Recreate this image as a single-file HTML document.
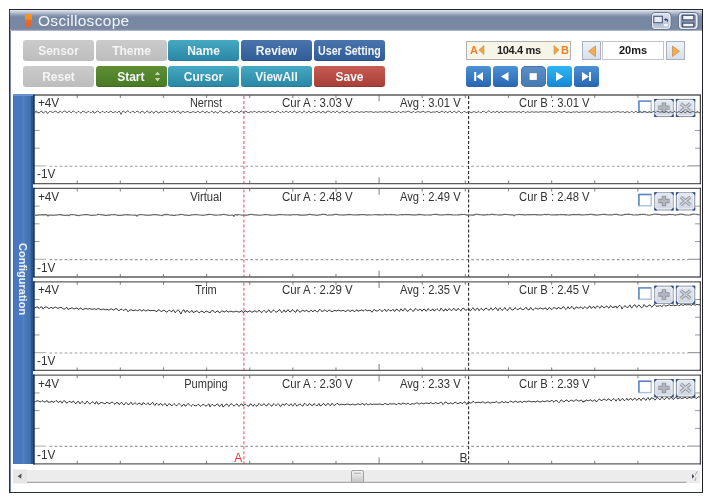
<!DOCTYPE html>
<html><head><meta charset="utf-8">
<style>
html,body{margin:0;padding:0;width:712px;height:502px;overflow:hidden;background:#fff;}
body{position:relative;font-family:"Liberation Sans",sans-serif;-webkit-font-smoothing:antialiased;}
.ttext,.btn,.tbox,.sidetext,.plots,.abs{will-change:transform;}
.abs{position:absolute;}
.win{position:absolute;left:9px;top:9px;width:692px;height:482px;border:1px solid #2a3448;border-right-color:#202228;border-bottom-color:#2a2e36;border-top-color:#24262c;background:#fff;}
.winl{position:absolute;left:10px;top:10px;width:1px;height:482px;background:#7888a8;}
.title{position:absolute;left:10px;top:10px;width:692px;height:21px;
 background:linear-gradient(#dfe5ee 0px,#c2cad8 2px,#8e9cb4 5px,#7888a2 7px,#7888a2 19px,#8a98b0 20px,#c8d0dc 21px);}
.ticon{position:absolute;left:24.8px;top:13.8px;width:6.8px;height:13.3px;background:linear-gradient(#f99424,#f68c22 38%,#ea6a2c 50%,#e6602e);}
.ttext{position:absolute;left:38px;top:10px;height:21px;line-height:21px;font-size:15.5px;color:#f4f6fa;letter-spacing:0.3px;}
.tb{position:absolute;top:12px;width:19px;height:17px;border-radius:3px;border:1px solid #b4bece;box-sizing:border-box;
 background:linear-gradient(#a4b0c4,#8a98b0);}
.btn{position:absolute;width:71px;height:21px;border-radius:3px;box-sizing:border-box;color:#f2f6f8;font-weight:bold;font-size:12px;
 line-height:23px;text-align:center;}
.gray{background:linear-gradient(#cbcbcb,#bdbdbd);color:#f4f4f4;}
.teal{background:linear-gradient(#46a9c2,#2a88a6);border-bottom:1px solid #227a94;}
.blue{background:linear-gradient(#4a74ac,#305c98);border-bottom:1px solid #2a5088;}
.green{background:linear-gradient(#5e8e34,#4a7a24);border-bottom:1px solid #3e6a1e;}
.red{background:linear-gradient(#c65c54,#aa3e38);border-bottom:1px solid #923430;}
.ab{position:absolute;left:466px;top:41px;width:105px;height:18.6px;box-sizing:border-box;border:1px solid #b0b0b0;background:#f7f4e8;}
.sbtn{position:absolute;top:41px;width:19px;height:19px;box-sizing:border-box;border:1px solid #a8b0c0;background:linear-gradient(#eef2f8,#d8e0ec);}
.tbox{position:absolute;left:602px;top:41px;width:62px;height:19px;box-sizing:border-box;border:1px solid #c4c4c4;background:#fff;
 font-weight:bold;font-size:11px;line-height:17px;text-align:center;color:#1a1a1a;}
.tr{position:absolute;top:66px;width:25px;height:21px;border-radius:3px;background:linear-gradient(#4c90d2,#3a7cc4 50%,#2864b0);}
.side{position:absolute;left:13px;top:94px;width:20px;height:370px;background:linear-gradient(90deg,#3c62a8 0px,#4a78c0 1.2px,#4a78c0 9px,#5482c8 10px,#4a7ab8 12px,#4272b0 17px,#2e5696 18.5px,#2a5090 20px);}
.sidetext{position:absolute;left:23px;top:279px;transform:translate(-50%,-50%) rotate(90deg);font-weight:bold;font-size:11px;color:#f0f4fa;white-space:nowrap;}
.stop{background:linear-gradient(#5e90c8,#5084bc 50%,#4678b2);box-shadow:inset 0 0 0 1px #4e74a4;border-radius:5px;}
.play{background:linear-gradient(#30b4f2,#22a0e8 50%,#1484d4);}
.plots{position:absolute;left:0;top:0;}
.scroll{position:absolute;left:13px;top:469.5px;width:687px;height:13.5px;background:#ececec;}
</style></head><body>
<div class="win"></div>
<div class="winl"></div>
<div class="title"></div>
<div class="ticon"></div>
<div class="ttext">Oscilloscope</div>
<svg class="abs" style="left:650px;top:11px" width="50" height="20">
<defs><linearGradient id="tbg1" x1="0" y1="0" x2="0" y2="1"><stop offset="0" stop-color="#dbe2ec"/><stop offset="1" stop-color="#b4c0d2"/></linearGradient></defs>
<rect x="1.5" y="1.5" width="19.5" height="17" rx="3.5" fill="url(#tbg1)" stroke="#66768f" stroke-width="1"/>
<rect x="2.6" y="2.6" width="17.3" height="14.8" rx="2.6" fill="none" stroke="#eef2f8" stroke-width="0.9"/>
<rect x="3.8" y="5.3" width="8.6" height="6.4" fill="#e6edf7" stroke="#56627a" stroke-width="1.2"/>
<path d="M14 8.6 L16.2 6.9 L16.2 10.3 Z" fill="#2a3a60"/><path d="M15.8 8.6 H17.6 V10.8" fill="none" stroke="#2a3a60" stroke-width="1"/>
<path d="M3.5 13.8 H12" stroke="#8898b8" stroke-width="0.8" stroke-dasharray="1 1.2"/>
<rect x="14" y="13" width="3.8" height="2.2" fill="#f0f4fa"/>
<rect x="28.5" y="1.5" width="19.5" height="17" rx="3.5" fill="#8796ae" stroke="#66768f" stroke-width="1"/>
<rect x="29.8" y="2.8" width="16.9" height="14.4" rx="2.6" fill="none" stroke="#e8eef6" stroke-width="1.6"/>
<rect x="32.6" y="4.3" width="11.2" height="4.6" fill="#f0f4fa" stroke="#4e5a72" stroke-width="1.3"/>
<rect x="32.6" y="12.1" width="11.2" height="3.8" fill="#f0f4fa" stroke="#4e5a72" stroke-width="1.3"/>
</svg>

<div class="btn gray" style="left:23px;top:40px">Sensor</div>
<div class="btn gray" style="left:95.5px;top:40px">Theme</div>
<div class="btn teal" style="left:168px;top:40px">Name</div>
<div class="btn blue" style="left:241px;top:40px">Review</div>
<div class="btn blue" style="left:313.5px;top:40px"><span style="display:inline-block;transform:scaleX(0.885);white-space:nowrap;margin-left:-8px;margin-right:-8px">User Setting</span></div>
<div class="btn gray" style="left:23px;top:66px">Reset</div>
<div class="btn green" style="left:95.5px;top:66px;text-align:left;padding-left:21.2px">Start<svg class="abs" style="left:58px;top:5px" width="8" height="11"><path d="M0.8 4 L3.5 0.6 L6.2 4 Z M0.8 7 L3.5 10.4 L6.2 7 Z" fill="#c4d4b4"/></svg></div>
<div class="btn teal" style="left:168px;top:66px">Cursor</div>
<div class="btn teal" style="left:241px;top:66px">ViewAll</div>
<div class="btn red" style="left:313.5px;top:66px">Save</div>

<div class="ab"></div>
<div class="abs" style="left:470px;top:41px;font-weight:bold;font-size:11px;line-height:19px;color:#f08424">A</div>
<svg class="abs" style="left:478px;top:45px" width="7" height="11"><path d="M6 0.5 L0.8 5 L6 9.5 Z" fill="#f4a040" stroke="#b8a060" stroke-width="0.6"/></svg>
<div class="abs" style="left:496.5px;top:41px;font-weight:bold;font-size:11px;line-height:19px;color:#1e1e1e;letter-spacing:-0.35px">104.4 ms</div>
<svg class="abs" style="left:553px;top:45px" width="7" height="11"><path d="M1 0.5 L6.2 5 L1 9.5 Z" fill="#f4a040" stroke="#b8a060" stroke-width="0.6"/></svg>
<div class="abs" style="left:561px;top:41px;font-weight:bold;font-size:11px;line-height:19px;color:#f08424">B</div>
<div class="sbtn" style="left:581.5px"><svg class="abs" style="left:4px;top:3px" width="10" height="13"><path d="M8.5 1 L1.5 6.3 L8.5 11.6 Z" fill="#f8ac50" stroke="#c89050" stroke-width="0.8"/></svg></div>
<div class="tbox">20ms</div>
<div class="sbtn" style="left:666px"><svg class="abs" style="left:4px;top:3px" width="10" height="13"><path d="M1.5 1 L8.5 6.3 L1.5 11.6 Z" fill="#f8ac50" stroke="#c89050" stroke-width="0.8"/></svg></div>

<div class="tr" style="left:466px"><svg class="abs" style="left:0;top:0" width="25" height="21"><rect x="8.2" y="6" width="2" height="9" fill="#fff"/><path d="M10.2 10.5 L17 6 L17 15 Z" fill="#fff"/></svg></div>
<div class="tr" style="left:493px"><svg class="abs" style="left:0;top:0" width="25" height="21"><path d="M8 10.5 L15.5 6 L15.5 15 Z" fill="#fff"/></svg></div>
<div class="tr stop" style="left:520.5px"><svg class="abs" style="left:0;top:0" width="25" height="21"><rect x="8.6" y="7.2" width="7.2" height="6.7" fill="#fff"/></svg></div>
<div class="tr play" style="left:547px"><svg class="abs" style="left:0;top:0" width="25" height="21"><path d="M9 6 L16.5 10.5 L9 15 Z" fill="#fff"/></svg></div>
<div class="tr" style="left:574px"><svg class="abs" style="left:0;top:0" width="25" height="21"><path d="M8 6 L15 10.5 L8 15 Z" fill="#fff"/><rect x="15" y="6" width="2" height="9" fill="#fff"/></svg></div>

<div class="side"></div>
<div class="abs" style="left:13px;top:94px;width:20px;height:1.5px;background:#6890cc"></div>
<div class="sidetext">Configuration</div>
<div class="scroll"></div>
<svg class="abs" style="left:13px;top:469px" width="688" height="15">
<rect x="0" y="0.5" width="14" height="14" fill="#e6e6e6"/>
<path d="M4.6 7.3 L8.6 4.6 L8.2 9.8 Z" fill="#555"/>
<line x1="14" y1="13.4" x2="673.5" y2="13.4" stroke="#a8a8a8" stroke-width="1.2"/>
<path d="M679 5 L681.4 7.3 L679 9.8 Z" fill="#444"/>
<path d="M684 2.5 L682.2 6 M683 8.5 L681.8 12" stroke="#888" stroke-width="0.7"/>
<defs><linearGradient id="thg" x1="0" y1="0" x2="0" y2="1"><stop offset="0" stop-color="#f6f6f6"/><stop offset="1" stop-color="#c4c4c4"/></linearGradient></defs>
<rect x="338.5" y="1.5" width="12" height="12" rx="1.5" fill="url(#thg)" stroke="#a0a0a0" stroke-width="1"/>
<line x1="341" y1="4.2" x2="348" y2="4.2" stroke="#a8a8a8" stroke-width="1"/>
</svg>

<svg class="plots" width="712" height="502" viewBox="0 0 712 502">
<defs>
<linearGradient id="gbtn" x1="0" y1="0" x2="0" y2="1"><stop offset="0" stop-color="#e6eaf1"/><stop offset="1" stop-color="#d0d7e2"/></linearGradient>
</defs>
<style>.lb{font-family:"Liberation Sans",sans-serif;font-size:12px;fill:#333}</style>
<line x1="77.20" y1="95.0" x2="77.20" y2="98.0" stroke="#888" stroke-width="1.1"/>
<line x1="77.20" y1="180.6" x2="77.20" y2="183.6" stroke="#888" stroke-width="1.1"/>
<line x1="120.33" y1="95.0" x2="120.33" y2="98.0" stroke="#888" stroke-width="1.1"/>
<line x1="120.33" y1="180.6" x2="120.33" y2="183.6" stroke="#888" stroke-width="1.1"/>
<line x1="163.46" y1="95.0" x2="163.46" y2="98.0" stroke="#888" stroke-width="1.1"/>
<line x1="163.46" y1="180.6" x2="163.46" y2="183.6" stroke="#888" stroke-width="1.1"/>
<line x1="206.59" y1="95.0" x2="206.59" y2="98.0" stroke="#888" stroke-width="1.1"/>
<line x1="206.59" y1="180.6" x2="206.59" y2="183.6" stroke="#888" stroke-width="1.1"/>
<line x1="249.72" y1="95.0" x2="249.72" y2="98.0" stroke="#888" stroke-width="1.1"/>
<line x1="249.72" y1="180.6" x2="249.72" y2="183.6" stroke="#888" stroke-width="1.1"/>
<line x1="292.85" y1="95.0" x2="292.85" y2="98.0" stroke="#888" stroke-width="1.1"/>
<line x1="292.85" y1="180.6" x2="292.85" y2="183.6" stroke="#888" stroke-width="1.1"/>
<line x1="335.98" y1="95.0" x2="335.98" y2="98.0" stroke="#888" stroke-width="1.1"/>
<line x1="335.98" y1="180.6" x2="335.98" y2="183.6" stroke="#888" stroke-width="1.1"/>
<line x1="379.11" y1="95.0" x2="379.11" y2="101.3" stroke="#888" stroke-width="1.1"/>
<line x1="379.11" y1="177.29999999999998" x2="379.11" y2="183.6" stroke="#888" stroke-width="1.1"/>
<line x1="422.24" y1="95.0" x2="422.24" y2="98.0" stroke="#888" stroke-width="1.1"/>
<line x1="422.24" y1="180.6" x2="422.24" y2="183.6" stroke="#888" stroke-width="1.1"/>
<line x1="465.37" y1="95.0" x2="465.37" y2="98.0" stroke="#888" stroke-width="1.1"/>
<line x1="465.37" y1="180.6" x2="465.37" y2="183.6" stroke="#888" stroke-width="1.1"/>
<line x1="508.50" y1="95.0" x2="508.50" y2="98.0" stroke="#888" stroke-width="1.1"/>
<line x1="508.50" y1="180.6" x2="508.50" y2="183.6" stroke="#888" stroke-width="1.1"/>
<line x1="551.63" y1="95.0" x2="551.63" y2="98.0" stroke="#888" stroke-width="1.1"/>
<line x1="551.63" y1="180.6" x2="551.63" y2="183.6" stroke="#888" stroke-width="1.1"/>
<line x1="594.76" y1="95.0" x2="594.76" y2="98.0" stroke="#888" stroke-width="1.1"/>
<line x1="594.76" y1="180.6" x2="594.76" y2="183.6" stroke="#888" stroke-width="1.1"/>
<line x1="637.89" y1="95.0" x2="637.89" y2="98.0" stroke="#888" stroke-width="1.1"/>
<line x1="637.89" y1="180.6" x2="637.89" y2="183.6" stroke="#888" stroke-width="1.1"/>
<line x1="33.5" y1="112.72" x2="39.5" y2="112.72" stroke="#999" stroke-width="1"/>
<line x1="695.0" y1="112.72" x2="700.0" y2="112.72" stroke="#999" stroke-width="1"/>
<line x1="33.5" y1="130.44" x2="39.5" y2="130.44" stroke="#999" stroke-width="1"/>
<line x1="695.0" y1="130.44" x2="700.0" y2="130.44" stroke="#999" stroke-width="1"/>
<line x1="33.5" y1="148.16" x2="39.5" y2="148.16" stroke="#999" stroke-width="1"/>
<line x1="695.0" y1="148.16" x2="700.0" y2="148.16" stroke="#999" stroke-width="1"/>
<line x1="33.5" y1="165.88" x2="46.0" y2="165.88" stroke="#aaa" stroke-width="1"/>
<line x1="49.6" y1="166.18" x2="688.0" y2="166.18" stroke="#999" stroke-width="1.1" stroke-dasharray="2.6 2.42"/>
<line x1="688.0" y1="165.88" x2="700.0" y2="165.88" stroke="#888" stroke-width="1"/>
<line x1="243.9" y1="96.0" x2="243.9" y2="183.6" stroke="#f85464" stroke-width="1.1" stroke-dasharray="3 2"/>
<line x1="468.6" y1="96.0" x2="468.6" y2="183.6" stroke="#282828" stroke-width="1.1" stroke-dasharray="3 2"/>
<path d="M33.5 95.0 H700.35 M33.5 183.6 H700.35" fill="none" stroke="#5e5e5e" stroke-width="1.3"/>
<line x1="700.35" y1="94.4" x2="700.35" y2="184.2" stroke="#333" stroke-width="1.1"/>
<line x1="33.9" y1="94.4" x2="33.9" y2="184.2" stroke="#0e2444" stroke-width="1.6"/>
<text x="37.90" y="107.30" class="lb" textLength="21.20" lengthAdjust="spacingAndGlyphs" style="">+4V</text>
<text x="37.10" y="178.40" class="lb" textLength="18.30" lengthAdjust="spacingAndGlyphs" style="">-1V</text>
<text x="206.00" y="107.30" class="lb" text-anchor="middle" textLength="32.20" lengthAdjust="spacingAndGlyphs" style="">Nernst</text>
<text x="282.00" y="107.30" class="lb" textLength="70.60" lengthAdjust="spacingAndGlyphs" style="">Cur A : 3.03 V</text>
<text x="399.90" y="107.30" class="lb" textLength="60.70" lengthAdjust="spacingAndGlyphs" style="">Avg : 3.01 V</text>
<text x="519.10" y="107.30" class="lb" textLength="70.50" lengthAdjust="spacingAndGlyphs" style="">Cur B : 3.01 V</text>
<rect x="638.9" y="101.1" width="12.3" height="11.3" fill="#fff" stroke="#a8c0e0" stroke-width="1.4"/>
<path d="M638.9 112.4 V101.1 H651.2" fill="none" stroke="#5a82c2" stroke-width="1.4"/>
<rect x="654.8" y="99.4" width="18.3" height="17.1" fill="url(#gbtn)" stroke="#8a94a6" stroke-width="1.1"/>
<rect x="655.8" y="100.4" width="16.3" height="15.100000000000001" fill="none" stroke="#f4f6fa" stroke-width="0.8"/>
<path d="M654.3 98.9 h3.2 L654.3 102.10000000000001 Z M673.5999999999999 98.9 h-3.2 L673.5999999999999 102.10000000000001 Z M654.3 117.0 h3.2 L654.3 113.8 Z M673.5999999999999 117.0 h-3.2 L673.5999999999999 113.8 Z" fill="#2c4c88"/>
<path d="M658.3499999999999 107.65 H669.55 M663.9499999999999 102.45 V112.85000000000001" stroke="#8e9299" stroke-width="4.4"/>
<path d="M659.05 107.65 H668.8499999999999 M663.9499999999999 103.15 V112.15" stroke="#b2b6bd" stroke-width="2.6"/>
<rect x="676.4" y="99.4" width="18.3" height="17.1" fill="url(#gbtn)" stroke="#8a94a6" stroke-width="1.1"/>
<rect x="677.4" y="100.4" width="16.3" height="15.100000000000001" fill="none" stroke="#f4f6fa" stroke-width="0.8"/>
<path d="M675.9 98.9 h3.2 L675.9 102.10000000000001 Z M695.1999999999999 98.9 h-3.2 L695.1999999999999 102.10000000000001 Z M675.9 117.0 h3.2 L675.9 113.8 Z M695.1999999999999 117.0 h-3.2 L695.1999999999999 113.8 Z" fill="#2c4c88"/>
<path d="M680.75 103.65 L690.3499999999999 111.65 M690.3499999999999 103.65 L680.75 111.65" stroke="#9298a2" stroke-width="3.4"/>
<path d="M680.75 103.65 L690.3499999999999 111.65 M690.3499999999999 103.65 L680.75 111.65" stroke="#d0d4dc" stroke-width="1.4"/>
<path d="M34.0 112.99L35.0 112.10L36.0 111.03L37.0 111.35L38.0 112.74L39.0 112.86L40.0 111.98L41.0 111.33L42.0 111.28L43.0 113.11L44.0 112.62L45.0 111.63L46.0 111.12L47.0 113.28L48.0 113.05L49.0 112.40L50.0 111.00L51.0 111.57L52.0 112.14L53.0 112.69L54.0 111.73L55.0 111.37L56.0 110.91L57.0 112.46L58.0 112.85L59.0 112.68L60.0 110.85L61.0 111.58L62.0 112.82L63.0 111.91L64.0 111.00L65.0 111.11L66.0 111.55L67.0 113.09L68.0 111.69L69.0 110.92L70.0 111.57L71.0 112.98L72.0 112.15L73.0 111.00L74.0 111.17L75.0 112.16L76.0 113.16L77.0 112.59L78.0 111.39L79.0 111.41L80.0 112.58L81.0 113.15L82.0 111.71L83.0 111.19L84.0 111.40L85.0 112.22L86.0 113.15L87.0 112.26L88.0 111.66L89.0 111.45L90.0 112.46L91.0 112.82L92.0 111.79L93.0 110.91L94.0 113.21L95.0 112.95L96.0 112.04L97.0 111.34L98.0 110.98L99.0 112.09L100.0 112.92L101.0 112.49L102.0 111.34L103.0 111.39L104.0 112.50L105.0 112.69L106.0 111.46L107.0 111.55L108.0 112.58L109.0 112.43L110.0 111.51L111.0 111.00L112.0 112.12L113.0 112.75L114.0 112.45L115.0 111.55L116.0 111.71L117.0 112.77L118.0 112.18L119.0 110.92L120.0 112.13L121.0 114.44L122.0 112.44L123.0 110.88L124.0 111.59L125.0 112.45L126.0 112.53L127.0 111.07L128.0 110.85L129.0 111.72L130.0 112.80L131.0 112.62L132.0 111.45L133.0 111.18L134.0 112.03L135.0 112.85L136.0 111.77L137.0 111.22L138.0 111.36L139.0 112.23L140.0 113.32L141.0 111.87L142.0 111.40L143.0 111.20L144.0 112.78L145.0 113.25L146.0 112.09L147.0 110.80L148.0 111.76L149.0 112.46L150.0 113.06L151.0 111.51L152.0 111.23L153.0 112.72L154.0 113.29L155.0 111.62L156.0 111.15L157.0 111.38L158.0 113.02L159.0 112.92L160.0 112.17L161.0 111.42L162.0 112.17L163.0 112.73L164.0 111.51L165.0 111.13L166.0 112.17L167.0 112.69L168.0 112.38L169.0 111.28L170.0 111.00L171.0 112.32L172.0 112.59L173.0 111.74L174.0 110.92L175.0 112.65L176.0 112.43L177.0 111.14L178.0 111.14L179.0 111.48L180.0 113.15L181.0 113.16L182.0 111.52L183.0 111.16L184.0 112.05L185.0 112.50L186.0 112.05L187.0 111.77L188.0 111.33L189.0 112.28L190.0 112.80L191.0 112.56L192.0 112.22L193.0 111.39L194.0 111.97L195.0 112.43L196.0 112.59L197.0 111.78L198.0 111.00L199.0 111.84L200.0 113.13L201.0 112.08L202.0 111.46L203.0 111.15L204.0 112.32L205.0 112.98L206.0 112.08L207.0 111.28L208.0 112.23L209.0 112.95L210.0 112.55L211.0 111.46L212.0 111.05L213.0 112.48L214.0 113.11L215.0 111.57L216.0 111.66L217.0 112.90L218.0 113.06L219.0 111.72L220.0 110.75L221.0 111.33L222.0 111.97L223.0 112.44L224.0 113.02L225.0 112.03L226.0 111.48L227.0 111.34L228.0 112.26L229.0 113.17L230.0 112.44L231.0 110.86L232.0 111.28L233.0 111.88L234.0 113.06L235.0 112.00L236.0 111.68L237.0 111.15L238.0 112.01L239.0 113.15L240.0 112.13L241.0 110.89L242.0 111.34L243.0 112.58L244.0 112.80L245.0 111.31L246.0 111.28L247.0 111.92L248.0 112.74L249.0 112.55L250.0 111.94L251.0 111.47L252.0 112.22L253.0 112.36L254.0 111.11L255.0 111.26L256.0 112.36L257.0 112.54L258.0 111.72L259.0 111.54L260.0 111.83L261.0 112.50L262.0 112.13L263.0 111.24L264.0 111.75L265.0 112.29L266.0 112.32L267.0 111.51L268.0 110.97L269.0 111.64L270.0 112.95L271.0 112.11L272.0 111.25L273.0 111.45L274.0 112.42L275.0 112.86L276.0 112.19L277.0 111.32L278.0 111.23L279.0 111.76L280.0 112.80L281.0 112.72L282.0 111.71L283.0 111.54L284.0 112.81L285.0 111.73L286.0 111.24L287.0 111.50L288.0 112.68L289.0 112.22L290.0 111.14L291.0 111.85L292.0 112.90L293.0 112.30L294.0 110.89L295.0 111.19L296.0 112.51L297.0 112.89L298.0 112.28L299.0 111.68L300.0 111.27L301.0 112.36L302.0 113.04L303.0 112.38L304.0 110.98L305.0 111.53L306.0 112.52L307.0 113.04L308.0 111.64L309.0 111.07L310.0 112.30L311.0 112.63L312.0 112.77L313.0 111.38L314.0 111.42L315.0 111.83L316.0 112.67L317.0 112.26L318.0 111.43L319.0 111.27L320.0 112.25L321.0 113.10L322.0 111.73L323.0 111.21L324.0 112.02L325.0 112.67L326.0 112.96L327.0 111.24L328.0 111.17L329.0 111.17L330.0 112.11L331.0 112.50L332.0 112.15L333.0 111.40L334.0 111.41L335.0 112.84L336.0 111.95L337.0 110.96L338.0 111.65L339.0 112.91L340.0 112.87L341.0 112.47L342.0 111.12L343.0 111.48L344.0 112.28L345.0 112.73L346.0 111.86L347.0 111.32L348.0 111.55L349.0 112.79L350.0 112.92L351.0 111.86L352.0 111.61L353.0 111.96L354.0 112.35L355.0 112.35L356.0 111.73L357.0 111.27L358.0 112.01L359.0 112.33L360.0 112.40L361.0 111.57L362.0 111.89L363.0 112.26L364.0 112.32L365.0 111.90L366.0 111.60L367.0 111.58L368.0 112.28L369.0 111.90L370.0 111.82L371.0 111.69L372.0 111.82L373.0 112.37L374.0 112.50L375.0 111.91L376.0 111.66L377.0 112.27L378.0 112.38L379.0 111.84L380.0 111.95L381.0 111.60L382.0 112.24L383.0 112.24L384.0 111.99L385.0 111.29L386.0 112.13L387.0 112.34L388.0 111.98L389.0 111.37L390.0 111.79L391.0 112.14L392.0 112.58L393.0 112.44L394.0 112.00L395.0 111.69L396.0 112.01L397.0 112.84L398.0 111.33L399.0 111.38L400.0 112.53L401.0 112.64L402.0 111.89L403.0 111.56L404.0 111.72L405.0 112.34L406.0 112.07L407.0 111.64L408.0 111.10L409.0 111.35L410.0 112.08L411.0 112.52L412.0 112.83L413.0 111.40L414.0 111.58L415.0 112.59L416.0 112.55L417.0 111.63L418.0 111.81L419.0 111.66L420.0 112.31L421.0 112.47L422.0 111.55L423.0 111.41L424.0 111.57L425.0 112.50L426.0 112.21L427.0 111.81L428.0 111.64L429.0 111.50L430.0 112.11L431.0 112.60L432.0 112.12L433.0 112.08L434.0 111.85L435.0 112.28L436.0 111.82L437.0 111.31L438.0 111.94L439.0 112.74L440.0 112.29L441.0 111.80L442.0 111.36L443.0 111.49L444.0 112.64L445.0 112.05L446.0 111.20L447.0 112.68L448.0 112.57L449.0 111.87L450.0 110.85L451.0 112.20L452.0 113.03L453.0 112.23L454.0 111.12L455.0 111.45L456.0 112.83L457.0 112.81L458.0 111.33L459.0 110.95L460.0 112.17L461.0 112.88L462.0 112.96L463.0 112.24L464.0 111.23L465.0 111.69L466.0 112.52L467.0 112.44L468.0 111.80L469.0 111.53L470.0 112.06L471.0 112.70L472.0 112.57L473.0 111.83L474.0 111.59L475.0 111.90L476.0 112.53L477.0 112.53L478.0 111.70L479.0 111.51L480.0 112.69L481.0 112.74L482.0 111.95L483.0 111.07L484.0 111.42L485.0 111.98L486.0 112.92L487.0 112.52L488.0 111.08L489.0 110.83L490.0 111.78L491.0 112.79L492.0 112.33L493.0 111.56L494.0 111.69L495.0 112.62L496.0 111.88L497.0 111.23L498.0 111.46L499.0 113.10L500.0 112.08L501.0 111.26L502.0 112.17L503.0 112.61L504.0 112.02L505.0 111.28L506.0 111.83L507.0 112.23L508.0 112.33L509.0 111.76L510.0 111.84L511.0 111.62L512.0 112.38L513.0 111.90L514.0 111.71L515.0 111.76L516.0 112.14L517.0 112.48L518.0 111.78L519.0 111.46L520.0 112.08L521.0 112.66L522.0 111.85L523.0 111.41L524.0 111.39L525.0 112.62L526.0 112.82L527.0 111.55L528.0 112.01L529.0 112.03L530.0 112.51L531.0 111.96L532.0 111.64L533.0 112.06L534.0 112.29L535.0 111.97L536.0 111.83L537.0 111.91L538.0 112.22L539.0 112.27L540.0 111.60L541.0 111.80L542.0 111.85L543.0 112.09L544.0 112.07L545.0 111.77L546.0 111.69L547.0 112.60L548.0 111.94L549.0 111.78L550.0 111.57L551.0 111.67L552.0 112.41L553.0 112.39L554.0 112.06L555.0 111.81L556.0 112.32L557.0 112.57L558.0 111.42L559.0 111.38L560.0 111.64L561.0 112.29L562.0 112.50L563.0 111.74L564.0 111.38L565.0 111.48L566.0 112.44L567.0 112.58L568.0 111.90L569.0 111.75L570.0 112.51L571.0 112.38L572.0 112.51L573.0 111.55L574.0 112.02L575.0 112.24L576.0 111.91L577.0 111.48L578.0 112.38L579.0 112.34L580.0 112.31L581.0 112.09L582.0 111.61L583.0 112.09L584.0 112.08L585.0 111.74L586.0 111.58L587.0 112.44L588.0 112.42L589.0 111.81L590.0 111.38L591.0 112.42L592.0 112.49L593.0 112.13L594.0 111.56L595.0 112.11L596.0 111.82L597.0 112.30L598.0 112.10L599.0 111.53L600.0 111.73L601.0 111.99L602.0 112.37L603.0 112.19L604.0 111.58L605.0 111.94L606.0 112.20L607.0 112.07L608.0 112.28L609.0 111.71L610.0 111.71L611.0 112.43L612.0 112.52L613.0 111.59L614.0 111.73L615.0 112.01L616.0 112.32L617.0 111.53L618.0 111.73L619.0 111.74L620.0 112.25L621.0 112.32L622.0 111.75L623.0 111.62L624.0 112.11L625.0 112.68L626.0 112.14L627.0 111.59L628.0 111.90L629.0 112.38L630.0 112.72L631.0 111.57L632.0 111.17L633.0 112.46L634.0 112.83L635.0 111.59L636.0 111.30L637.0 112.12L638.0 112.86L639.0 112.15L640.0 111.22L641.0 112.08L642.0 112.68L643.0 111.84L644.0 111.44L645.0 111.18L646.0 111.89L647.0 112.65L648.0 112.48L649.0 111.50L650.0 111.83L651.0 112.76L652.0 112.27L653.0 111.72L654.0 111.35L655.0 112.24L656.0 112.37L657.0 111.35L658.0 111.18L659.0 112.01L660.0 112.21L661.0 112.10L662.0 111.37L663.0 111.84L664.0 112.59L665.0 111.98L666.0 111.38L667.0 111.77L668.0 112.57L669.0 112.53L670.0 111.60L671.0 111.90L672.0 112.52L673.0 112.72L674.0 111.56L675.0 111.34L676.0 112.60L677.0 112.65L678.0 111.89L679.0 111.68L680.0 111.91L681.0 112.97L682.0 112.17L683.0 111.40L684.0 111.61L685.0 113.01L686.0 112.29L687.0 111.51L688.0 111.35L689.0 112.07L690.0 112.97L691.0 112.29L692.0 111.64L693.0 111.57L694.0 111.81L695.0 112.46L696.0 112.42L697.0 111.71L698.0 111.54L699.0 112.76L700.0 112.41" fill="none" stroke="#5c5c5c" stroke-width="0.95" stroke-linejoin="round"/>
<line x1="77.20" y1="188.4" x2="77.20" y2="191.4" stroke="#888" stroke-width="1.1"/>
<line x1="77.20" y1="274.0" x2="77.20" y2="277.0" stroke="#888" stroke-width="1.1"/>
<line x1="120.33" y1="188.4" x2="120.33" y2="191.4" stroke="#888" stroke-width="1.1"/>
<line x1="120.33" y1="274.0" x2="120.33" y2="277.0" stroke="#888" stroke-width="1.1"/>
<line x1="163.46" y1="188.4" x2="163.46" y2="191.4" stroke="#888" stroke-width="1.1"/>
<line x1="163.46" y1="274.0" x2="163.46" y2="277.0" stroke="#888" stroke-width="1.1"/>
<line x1="206.59" y1="188.4" x2="206.59" y2="191.4" stroke="#888" stroke-width="1.1"/>
<line x1="206.59" y1="274.0" x2="206.59" y2="277.0" stroke="#888" stroke-width="1.1"/>
<line x1="249.72" y1="188.4" x2="249.72" y2="191.4" stroke="#888" stroke-width="1.1"/>
<line x1="249.72" y1="274.0" x2="249.72" y2="277.0" stroke="#888" stroke-width="1.1"/>
<line x1="292.85" y1="188.4" x2="292.85" y2="191.4" stroke="#888" stroke-width="1.1"/>
<line x1="292.85" y1="274.0" x2="292.85" y2="277.0" stroke="#888" stroke-width="1.1"/>
<line x1="335.98" y1="188.4" x2="335.98" y2="191.4" stroke="#888" stroke-width="1.1"/>
<line x1="335.98" y1="274.0" x2="335.98" y2="277.0" stroke="#888" stroke-width="1.1"/>
<line x1="379.11" y1="188.4" x2="379.11" y2="194.70000000000002" stroke="#888" stroke-width="1.1"/>
<line x1="379.11" y1="270.7" x2="379.11" y2="277.0" stroke="#888" stroke-width="1.1"/>
<line x1="422.24" y1="188.4" x2="422.24" y2="191.4" stroke="#888" stroke-width="1.1"/>
<line x1="422.24" y1="274.0" x2="422.24" y2="277.0" stroke="#888" stroke-width="1.1"/>
<line x1="465.37" y1="188.4" x2="465.37" y2="191.4" stroke="#888" stroke-width="1.1"/>
<line x1="465.37" y1="274.0" x2="465.37" y2="277.0" stroke="#888" stroke-width="1.1"/>
<line x1="508.50" y1="188.4" x2="508.50" y2="191.4" stroke="#888" stroke-width="1.1"/>
<line x1="508.50" y1="274.0" x2="508.50" y2="277.0" stroke="#888" stroke-width="1.1"/>
<line x1="551.63" y1="188.4" x2="551.63" y2="191.4" stroke="#888" stroke-width="1.1"/>
<line x1="551.63" y1="274.0" x2="551.63" y2="277.0" stroke="#888" stroke-width="1.1"/>
<line x1="594.76" y1="188.4" x2="594.76" y2="191.4" stroke="#888" stroke-width="1.1"/>
<line x1="594.76" y1="274.0" x2="594.76" y2="277.0" stroke="#888" stroke-width="1.1"/>
<line x1="637.89" y1="188.4" x2="637.89" y2="191.4" stroke="#888" stroke-width="1.1"/>
<line x1="637.89" y1="274.0" x2="637.89" y2="277.0" stroke="#888" stroke-width="1.1"/>
<line x1="33.5" y1="206.12" x2="39.5" y2="206.12" stroke="#999" stroke-width="1"/>
<line x1="695.0" y1="206.12" x2="700.0" y2="206.12" stroke="#999" stroke-width="1"/>
<line x1="33.5" y1="223.84" x2="39.5" y2="223.84" stroke="#999" stroke-width="1"/>
<line x1="695.0" y1="223.84" x2="700.0" y2="223.84" stroke="#999" stroke-width="1"/>
<line x1="33.5" y1="241.56" x2="39.5" y2="241.56" stroke="#999" stroke-width="1"/>
<line x1="695.0" y1="241.56" x2="700.0" y2="241.56" stroke="#999" stroke-width="1"/>
<line x1="33.5" y1="259.28" x2="46.0" y2="259.28" stroke="#aaa" stroke-width="1"/>
<line x1="49.6" y1="259.58" x2="688.0" y2="259.58" stroke="#999" stroke-width="1.1" stroke-dasharray="2.6 2.42"/>
<line x1="688.0" y1="259.28" x2="700.0" y2="259.28" stroke="#888" stroke-width="1"/>
<line x1="243.9" y1="189.4" x2="243.9" y2="277.0" stroke="#f85464" stroke-width="1.1" stroke-dasharray="3 2"/>
<line x1="468.6" y1="189.4" x2="468.6" y2="277.0" stroke="#282828" stroke-width="1.1" stroke-dasharray="3 2"/>
<path d="M33.5 188.4 H700.35 M33.5 277.0 H700.35" fill="none" stroke="#5e5e5e" stroke-width="1.3"/>
<line x1="700.35" y1="187.8" x2="700.35" y2="277.6" stroke="#333" stroke-width="1.1"/>
<line x1="33.9" y1="187.8" x2="33.9" y2="277.6" stroke="#0e2444" stroke-width="1.6"/>
<text x="37.90" y="200.70" class="lb" textLength="21.20" lengthAdjust="spacingAndGlyphs" style="">+4V</text>
<text x="37.10" y="271.80" class="lb" textLength="18.30" lengthAdjust="spacingAndGlyphs" style="">-1V</text>
<text x="206.00" y="200.70" class="lb" text-anchor="middle" textLength="31.70" lengthAdjust="spacingAndGlyphs" style="">Virtual</text>
<text x="282.00" y="200.70" class="lb" textLength="70.60" lengthAdjust="spacingAndGlyphs" style="">Cur A : 2.48 V</text>
<text x="399.90" y="200.70" class="lb" textLength="60.70" lengthAdjust="spacingAndGlyphs" style="">Avg : 2.49 V</text>
<text x="519.10" y="200.70" class="lb" textLength="70.50" lengthAdjust="spacingAndGlyphs" style="">Cur B : 2.48 V</text>
<rect x="638.9" y="194.5" width="12.3" height="11.3" fill="#fff" stroke="#a8c0e0" stroke-width="1.4"/>
<path d="M638.9 205.8 V194.5 H651.2" fill="none" stroke="#5a82c2" stroke-width="1.4"/>
<rect x="654.8" y="192.8" width="18.3" height="17.1" fill="url(#gbtn)" stroke="#8a94a6" stroke-width="1.1"/>
<rect x="655.8" y="193.8" width="16.3" height="15.100000000000001" fill="none" stroke="#f4f6fa" stroke-width="0.8"/>
<path d="M654.3 192.3 h3.2 L654.3 195.5 Z M673.5999999999999 192.3 h-3.2 L673.5999999999999 195.5 Z M654.3 210.4 h3.2 L654.3 207.20000000000002 Z M673.5999999999999 210.4 h-3.2 L673.5999999999999 207.20000000000002 Z" fill="#2c4c88"/>
<path d="M658.3499999999999 201.05 H669.55 M663.9499999999999 195.85000000000002 V206.25" stroke="#8e9299" stroke-width="4.4"/>
<path d="M659.05 201.05 H668.8499999999999 M663.9499999999999 196.55 V205.55" stroke="#b2b6bd" stroke-width="2.6"/>
<rect x="676.4" y="192.8" width="18.3" height="17.1" fill="url(#gbtn)" stroke="#8a94a6" stroke-width="1.1"/>
<rect x="677.4" y="193.8" width="16.3" height="15.100000000000001" fill="none" stroke="#f4f6fa" stroke-width="0.8"/>
<path d="M675.9 192.3 h3.2 L675.9 195.5 Z M695.1999999999999 192.3 h-3.2 L695.1999999999999 195.5 Z M675.9 210.4 h3.2 L675.9 207.20000000000002 Z M695.1999999999999 210.4 h-3.2 L695.1999999999999 207.20000000000002 Z" fill="#2c4c88"/>
<path d="M680.75 197.05 L690.3499999999999 205.05 M690.3499999999999 197.05 L680.75 205.05" stroke="#9298a2" stroke-width="3.4"/>
<path d="M680.75 197.05 L690.3499999999999 205.05 M690.3499999999999 197.05 L680.75 205.05" stroke="#d0d4dc" stroke-width="1.4"/>
<path d="M34.0 215.19L35.0 215.12L36.0 215.31L37.0 215.19L38.0 215.17L39.0 214.85L40.0 214.95L41.0 214.88L42.0 214.69L43.0 214.88L44.0 214.71L45.0 214.86L46.0 214.71L47.0 214.79L48.0 216.14L49.0 215.01L50.0 215.08L51.0 215.13L52.0 215.17L53.0 215.28L54.0 215.13L55.0 215.20L56.0 215.12L57.0 214.76L58.0 214.80L59.0 214.70L60.0 214.70L61.0 214.63L62.0 215.11L63.0 215.04L64.0 215.33L65.0 215.27L66.0 215.38L67.0 215.16L68.0 214.98L69.0 215.70L70.0 214.72L71.0 214.49L72.0 214.72L73.0 214.54L74.0 214.78L75.0 214.92L76.0 215.29L77.0 215.21L78.0 215.44L79.0 215.63L80.0 215.23L81.0 215.13L82.0 215.02L83.0 214.85L84.0 214.55L85.0 214.54L86.0 214.49L87.0 214.54L88.0 214.69L89.0 215.03L90.0 215.18L91.0 215.42L92.0 215.33L93.0 215.33L94.0 215.18L95.0 215.22L96.0 214.98L97.0 214.89L98.0 214.30L99.0 214.52L100.0 214.74L101.0 214.65L102.0 214.84L103.0 214.96L104.0 215.14L105.0 215.38L106.0 215.33L107.0 215.46L108.0 215.10L109.0 215.02L110.0 215.15L111.0 214.68L112.0 214.77L113.0 214.55L114.0 214.78L115.0 214.68L116.0 214.73L117.0 215.18L118.0 215.31L119.0 215.31L120.0 215.23L121.0 215.42L122.0 215.06L123.0 215.09L124.0 214.87L125.0 214.78L126.0 214.63L127.0 214.86L128.0 214.66L129.0 214.84L130.0 215.00L131.0 214.83L132.0 215.03L133.0 215.23L134.0 215.12L135.0 215.06L136.0 215.16L137.0 216.23L138.0 215.05L139.0 214.78L140.0 214.60L141.0 214.62L142.0 214.75L143.0 214.74L144.0 214.92L145.0 215.08L146.0 215.10L147.0 215.02L148.0 215.57L149.0 214.99L150.0 215.19L151.0 215.09L152.0 214.95L153.0 214.64L154.0 214.68L155.0 214.71L156.0 214.62L157.0 214.93L158.0 214.91L159.0 215.06L160.0 215.20L161.0 215.26L162.0 215.65L163.0 214.95L164.0 214.87L165.0 214.63L166.0 214.46L167.0 214.67L168.0 214.46L169.0 214.78L170.0 215.07L171.0 215.19L172.0 215.10L173.0 215.41L174.0 215.33L175.0 215.44L176.0 215.15L177.0 215.00L178.0 215.01L179.0 214.65L180.0 214.58L181.0 214.38L182.0 214.48L183.0 214.54L184.0 214.97L185.0 215.04L186.0 215.17L187.0 215.14L188.0 215.49L189.0 215.40L190.0 215.33L191.0 214.95L192.0 214.89L193.0 214.74L194.0 214.72L195.0 214.71L196.0 214.66L197.0 214.61L198.0 214.75L199.0 214.98L200.0 214.96L201.0 215.26L202.0 214.99L203.0 215.31L204.0 215.19L205.0 214.96L206.0 215.02L207.0 214.60L208.0 214.58L209.0 214.44L210.0 214.33L211.0 214.49L212.0 214.49L213.0 215.00L214.0 214.88L215.0 215.05L216.0 215.11L217.0 215.03L218.0 214.99L219.0 214.91L220.0 214.74L221.0 214.91L222.0 214.67L223.0 214.47L224.0 214.41L225.0 214.65L226.0 214.76L227.0 214.92L228.0 215.16L229.0 215.28L230.0 215.26L231.0 215.23L232.0 215.14L233.0 215.18L234.0 216.37L235.0 214.78L236.0 214.49L237.0 215.25L238.0 214.47L239.0 214.69L240.0 214.73L241.0 214.98L242.0 215.14L243.0 215.06L244.0 215.11L245.0 215.18L246.0 215.19L247.0 215.04L248.0 214.88L249.0 214.62L250.0 214.53L251.0 214.52L252.0 214.40L253.0 214.64L254.0 214.85L255.0 214.78L256.0 214.76L257.0 215.08L258.0 215.18L259.0 215.14L260.0 215.23L261.0 215.06L262.0 215.00L263.0 214.94L264.0 214.76L265.0 214.45L266.0 214.73L267.0 214.65L268.0 214.74L269.0 214.86L270.0 215.08L271.0 215.17L272.0 215.03L273.0 215.27L274.0 215.15L275.0 215.18L276.0 215.12L277.0 214.85L278.0 214.69L279.0 214.62L280.0 214.51L281.0 214.58L282.0 214.74L283.0 214.69L284.0 214.72L285.0 214.90L286.0 214.91L287.0 215.02L288.0 214.97L289.0 214.96L290.0 215.14L291.0 214.94L292.0 214.82L293.0 214.73L294.0 214.67L295.0 214.69L296.0 214.75L297.0 214.69L298.0 214.65L299.0 215.07L300.0 214.89L301.0 215.12L302.0 215.06L303.0 215.15L304.0 215.22L305.0 215.13L306.0 214.93L307.0 214.79L308.0 214.72L309.0 214.37L310.0 214.45L311.0 214.69L312.0 214.46L313.0 214.83L314.0 214.80L315.0 215.13L316.0 215.01L317.0 215.30L318.0 215.17L319.0 214.86L320.0 214.96L321.0 214.70L322.0 214.41L323.0 214.43L324.0 214.33L325.0 214.40L326.0 214.68L327.0 215.04L328.0 215.22L329.0 214.82L330.0 215.02L331.0 215.15L332.0 214.90L333.0 214.88L334.0 214.70L335.0 214.40L336.0 214.46L337.0 214.45L338.0 214.70L339.0 214.91L340.0 214.85L341.0 215.03L342.0 214.76L343.0 215.28L344.0 214.94L345.0 214.93L346.0 214.78L347.0 214.70L348.0 214.64L349.0 214.40L350.0 214.60L351.0 214.49L352.0 214.76L353.0 214.89L354.0 214.92L355.0 215.02L356.0 214.97L357.0 214.94L358.0 214.71L359.0 214.82L360.0 214.60L361.0 214.61L362.0 214.50L363.0 214.53L364.0 214.63L365.0 214.64L366.0 214.85L367.0 215.09L368.0 214.96L369.0 214.90L370.0 214.79L371.0 214.98L372.0 214.99L373.0 214.73L374.0 214.65L375.0 214.75L376.0 214.56L377.0 214.48L378.0 214.85L379.0 214.64L380.0 214.93L381.0 214.92L382.0 214.79L383.0 214.88L384.0 214.88L385.0 214.16L386.0 214.85L387.0 214.62L388.0 214.77L389.0 214.58L390.0 214.61L391.0 214.64L392.0 214.46L393.0 214.78L394.0 214.65L395.0 214.81L396.0 214.97L397.0 215.16L398.0 215.03L399.0 214.92L400.0 214.74L401.0 214.66L402.0 214.84L403.0 214.62L404.0 214.51L405.0 214.68L406.0 214.62L407.0 214.50L408.0 214.59L409.0 214.67L410.0 214.67L411.0 214.79L412.0 214.86L413.0 214.95L414.0 214.96L415.0 215.10L416.0 214.79L417.0 214.92L418.0 214.56L419.0 214.44L420.0 214.54L421.0 214.48L422.0 214.66L423.0 214.78L424.0 214.85L425.0 215.05L426.0 215.00L427.0 214.97L428.0 215.01L429.0 214.97L430.0 215.04L431.0 214.90L432.0 214.81L433.0 214.44L434.0 214.48L435.0 214.33L436.0 214.46L437.0 214.43L438.0 214.68L439.0 214.90L440.0 214.90L441.0 215.03L442.0 214.93L443.0 214.86L444.0 214.90L445.0 214.73L446.0 214.68L447.0 214.70L448.0 214.40L449.0 214.60L450.0 214.63L451.0 214.49L452.0 214.84L453.0 214.93L454.0 214.98L455.0 214.93L456.0 214.99L457.0 214.95L458.0 214.79L459.0 214.89L460.0 214.62L461.0 214.59L462.0 214.34L463.0 214.48L464.0 214.48L465.0 214.45L466.0 214.92L467.0 215.15L468.0 215.04L469.0 215.20L470.0 215.00L471.0 214.89L472.0 215.04L473.0 214.90L474.0 215.14L475.0 214.59L476.0 214.22L477.0 214.21L478.0 214.46L479.0 214.64L480.0 214.58L481.0 214.77L482.0 214.96L483.0 214.92L484.0 215.19L485.0 214.89L486.0 214.83L487.0 214.62L488.0 214.46L489.0 214.72L490.0 214.57L491.0 214.38L492.0 214.45L493.0 214.41L494.0 214.63L495.0 214.69L496.0 214.75L497.0 214.76L498.0 214.93L499.0 215.05L500.0 214.82L501.0 214.82L502.0 214.88L503.0 214.74L504.0 214.34L505.0 214.29L506.0 214.47L507.0 214.51L508.0 214.54L509.0 214.74L510.0 214.78L511.0 214.84L512.0 214.94L513.0 214.80L514.0 215.86L515.0 214.87L516.0 214.74L517.0 214.76L518.0 214.64L519.0 214.41L520.0 214.52L521.0 214.62L522.0 214.66L523.0 214.70L524.0 214.90L525.0 214.92L526.0 214.81L527.0 214.71L528.0 214.67L529.0 214.66L530.0 214.80L531.0 214.60L532.0 214.57L533.0 214.58L534.0 214.48L535.0 214.61L536.0 214.66L537.0 214.79L538.0 214.72L539.0 214.85L540.0 214.83L541.0 214.85L542.0 214.84L543.0 214.77L544.0 214.50L545.0 214.41L546.0 214.65L547.0 214.66L548.0 214.44L549.0 214.48L550.0 214.73L551.0 214.81L552.0 214.83L553.0 214.96L554.0 214.71L555.0 214.84L556.0 214.83L557.0 214.70L558.0 214.80L559.0 214.76L560.0 214.46L561.0 214.65L562.0 214.60L563.0 214.57L564.0 214.54L565.0 214.84L566.0 214.65L567.0 214.81L568.0 215.02L569.0 215.16L570.0 214.89L571.0 214.95L572.0 214.61L573.0 214.62L574.0 214.44L575.0 214.57L576.0 214.54L577.0 214.53L578.0 214.45L579.0 214.57L580.0 214.64L581.0 214.94L582.0 214.87L583.0 214.83L584.0 215.02L585.0 214.74L586.0 214.68L587.0 214.66L588.0 214.59L589.0 214.54L590.0 214.23L591.0 214.38L592.0 214.32L593.0 214.54L594.0 214.81L595.0 214.68L596.0 215.03L597.0 215.10L598.0 214.89L599.0 214.98L600.0 214.69L601.0 214.62L602.0 214.48L603.0 214.38L604.0 214.30L605.0 214.32L606.0 214.62L607.0 214.70L608.0 215.01L609.0 214.96L610.0 214.90L611.0 214.78L612.0 214.85L613.0 214.73L614.0 214.45L615.0 214.25L616.0 214.38L617.0 214.40L618.0 214.56L619.0 214.82L620.0 215.03L621.0 215.21L622.0 215.07L623.0 214.87L624.0 214.70L625.0 214.41L626.0 214.46L627.0 214.25L628.0 214.37L629.0 214.15L630.0 214.37L631.0 214.53L632.0 214.66L633.0 214.96L634.0 214.98L635.0 215.01L636.0 214.93L637.0 214.95L638.0 214.92L639.0 214.78L640.0 214.42L641.0 214.53L642.0 214.27L643.0 214.33L644.0 214.32L645.0 214.38L646.0 214.73L647.0 214.96L648.0 214.97L649.0 215.23L650.0 215.10L651.0 214.75L652.0 214.58L653.0 214.49L654.0 214.18L655.0 214.27L656.0 214.12L657.0 214.41L658.0 214.41L659.0 214.38L660.0 214.48L661.0 214.84L662.0 214.77L663.0 214.85L664.0 214.94L665.0 214.78L666.0 214.80L667.0 214.69L668.0 214.60L669.0 214.39L670.0 214.42L671.0 214.55L672.0 214.48L673.0 214.47L674.0 215.01L675.0 214.86L676.0 215.04L677.0 214.73L678.0 214.46L679.0 214.57L680.0 214.14L681.0 214.20L682.0 214.39L683.0 214.30L684.0 214.63L685.0 214.87L686.0 214.96L687.0 215.01L688.0 215.11L689.0 214.99L690.0 214.80L691.0 214.58L692.0 214.36L693.0 214.17L694.0 214.08L695.0 214.23L696.0 214.25L697.0 214.42L698.0 214.67L699.0 214.74L700.0 214.92" fill="none" stroke="#6a6a6a" stroke-width="1.2" stroke-linejoin="round"/>
<line x1="77.20" y1="281.8" x2="77.20" y2="284.8" stroke="#888" stroke-width="1.1"/>
<line x1="77.20" y1="367.4" x2="77.20" y2="370.4" stroke="#888" stroke-width="1.1"/>
<line x1="120.33" y1="281.8" x2="120.33" y2="284.8" stroke="#888" stroke-width="1.1"/>
<line x1="120.33" y1="367.4" x2="120.33" y2="370.4" stroke="#888" stroke-width="1.1"/>
<line x1="163.46" y1="281.8" x2="163.46" y2="284.8" stroke="#888" stroke-width="1.1"/>
<line x1="163.46" y1="367.4" x2="163.46" y2="370.4" stroke="#888" stroke-width="1.1"/>
<line x1="206.59" y1="281.8" x2="206.59" y2="284.8" stroke="#888" stroke-width="1.1"/>
<line x1="206.59" y1="367.4" x2="206.59" y2="370.4" stroke="#888" stroke-width="1.1"/>
<line x1="249.72" y1="281.8" x2="249.72" y2="284.8" stroke="#888" stroke-width="1.1"/>
<line x1="249.72" y1="367.4" x2="249.72" y2="370.4" stroke="#888" stroke-width="1.1"/>
<line x1="292.85" y1="281.8" x2="292.85" y2="284.8" stroke="#888" stroke-width="1.1"/>
<line x1="292.85" y1="367.4" x2="292.85" y2="370.4" stroke="#888" stroke-width="1.1"/>
<line x1="335.98" y1="281.8" x2="335.98" y2="284.8" stroke="#888" stroke-width="1.1"/>
<line x1="335.98" y1="367.4" x2="335.98" y2="370.4" stroke="#888" stroke-width="1.1"/>
<line x1="379.11" y1="281.8" x2="379.11" y2="288.1" stroke="#888" stroke-width="1.1"/>
<line x1="379.11" y1="364.09999999999997" x2="379.11" y2="370.4" stroke="#888" stroke-width="1.1"/>
<line x1="422.24" y1="281.8" x2="422.24" y2="284.8" stroke="#888" stroke-width="1.1"/>
<line x1="422.24" y1="367.4" x2="422.24" y2="370.4" stroke="#888" stroke-width="1.1"/>
<line x1="465.37" y1="281.8" x2="465.37" y2="284.8" stroke="#888" stroke-width="1.1"/>
<line x1="465.37" y1="367.4" x2="465.37" y2="370.4" stroke="#888" stroke-width="1.1"/>
<line x1="508.50" y1="281.8" x2="508.50" y2="284.8" stroke="#888" stroke-width="1.1"/>
<line x1="508.50" y1="367.4" x2="508.50" y2="370.4" stroke="#888" stroke-width="1.1"/>
<line x1="551.63" y1="281.8" x2="551.63" y2="284.8" stroke="#888" stroke-width="1.1"/>
<line x1="551.63" y1="367.4" x2="551.63" y2="370.4" stroke="#888" stroke-width="1.1"/>
<line x1="594.76" y1="281.8" x2="594.76" y2="284.8" stroke="#888" stroke-width="1.1"/>
<line x1="594.76" y1="367.4" x2="594.76" y2="370.4" stroke="#888" stroke-width="1.1"/>
<line x1="637.89" y1="281.8" x2="637.89" y2="284.8" stroke="#888" stroke-width="1.1"/>
<line x1="637.89" y1="367.4" x2="637.89" y2="370.4" stroke="#888" stroke-width="1.1"/>
<line x1="33.5" y1="299.52" x2="39.5" y2="299.52" stroke="#999" stroke-width="1"/>
<line x1="695.0" y1="299.52" x2="700.0" y2="299.52" stroke="#999" stroke-width="1"/>
<line x1="33.5" y1="317.24" x2="39.5" y2="317.24" stroke="#999" stroke-width="1"/>
<line x1="695.0" y1="317.24" x2="700.0" y2="317.24" stroke="#999" stroke-width="1"/>
<line x1="33.5" y1="334.96" x2="39.5" y2="334.96" stroke="#999" stroke-width="1"/>
<line x1="695.0" y1="334.96" x2="700.0" y2="334.96" stroke="#999" stroke-width="1"/>
<line x1="33.5" y1="352.68" x2="46.0" y2="352.68" stroke="#aaa" stroke-width="1"/>
<line x1="49.6" y1="352.98" x2="688.0" y2="352.98" stroke="#999" stroke-width="1.1" stroke-dasharray="2.6 2.42"/>
<line x1="688.0" y1="352.68" x2="700.0" y2="352.68" stroke="#888" stroke-width="1"/>
<line x1="243.9" y1="282.8" x2="243.9" y2="370.4" stroke="#f85464" stroke-width="1.1" stroke-dasharray="3 2"/>
<line x1="468.6" y1="282.8" x2="468.6" y2="370.4" stroke="#282828" stroke-width="1.1" stroke-dasharray="3 2"/>
<path d="M33.5 281.8 H700.35 M33.5 370.4 H700.35" fill="none" stroke="#5e5e5e" stroke-width="1.3"/>
<line x1="700.35" y1="281.2" x2="700.35" y2="371.0" stroke="#333" stroke-width="1.1"/>
<line x1="33.9" y1="281.2" x2="33.9" y2="371.0" stroke="#0e2444" stroke-width="1.6"/>
<text x="37.90" y="294.10" class="lb" textLength="21.20" lengthAdjust="spacingAndGlyphs" style="">+4V</text>
<text x="37.10" y="365.20" class="lb" textLength="18.30" lengthAdjust="spacingAndGlyphs" style="">-1V</text>
<text x="206.00" y="294.10" class="lb" text-anchor="middle" textLength="21.60" lengthAdjust="spacingAndGlyphs" style="">Trim</text>
<text x="282.00" y="294.10" class="lb" textLength="70.60" lengthAdjust="spacingAndGlyphs" style="">Cur A : 2.29 V</text>
<text x="399.90" y="294.10" class="lb" textLength="60.70" lengthAdjust="spacingAndGlyphs" style="">Avg : 2.35 V</text>
<text x="519.10" y="294.10" class="lb" textLength="70.50" lengthAdjust="spacingAndGlyphs" style="">Cur B : 2.45 V</text>
<rect x="638.9" y="287.90000000000003" width="12.3" height="11.3" fill="#fff" stroke="#a8c0e0" stroke-width="1.4"/>
<path d="M638.9 299.2 V287.90000000000003 H651.2" fill="none" stroke="#5a82c2" stroke-width="1.4"/>
<rect x="654.8" y="286.2" width="18.3" height="17.1" fill="url(#gbtn)" stroke="#8a94a6" stroke-width="1.1"/>
<rect x="655.8" y="287.2" width="16.3" height="15.100000000000001" fill="none" stroke="#f4f6fa" stroke-width="0.8"/>
<path d="M654.3 285.7 h3.2 L654.3 288.9 Z M673.5999999999999 285.7 h-3.2 L673.5999999999999 288.9 Z M654.3 303.8 h3.2 L654.3 300.6 Z M673.5999999999999 303.8 h-3.2 L673.5999999999999 300.6 Z" fill="#2c4c88"/>
<path d="M658.3499999999999 294.45 H669.55 M663.9499999999999 289.25 V299.65" stroke="#8e9299" stroke-width="4.4"/>
<path d="M659.05 294.45 H668.8499999999999 M663.9499999999999 289.95 V298.95" stroke="#b2b6bd" stroke-width="2.6"/>
<rect x="676.4" y="286.2" width="18.3" height="17.1" fill="url(#gbtn)" stroke="#8a94a6" stroke-width="1.1"/>
<rect x="677.4" y="287.2" width="16.3" height="15.100000000000001" fill="none" stroke="#f4f6fa" stroke-width="0.8"/>
<path d="M675.9 285.7 h3.2 L675.9 288.9 Z M695.1999999999999 285.7 h-3.2 L695.1999999999999 288.9 Z M675.9 303.8 h3.2 L675.9 300.6 Z M695.1999999999999 303.8 h-3.2 L695.1999999999999 300.6 Z" fill="#2c4c88"/>
<path d="M680.75 290.45 L690.3499999999999 298.45 M690.3499999999999 290.45 L680.75 298.45" stroke="#9298a2" stroke-width="3.4"/>
<path d="M680.75 290.45 L690.3499999999999 298.45 M690.3499999999999 290.45 L680.75 298.45" stroke="#d0d4dc" stroke-width="1.4"/>
<path d="M34.0 308.51L35.0 307.95L36.0 307.14L37.0 307.13L38.0 306.91L39.0 308.63L40.0 307.56L41.0 306.87L42.0 306.94L43.0 309.01L44.0 308.12L45.0 306.98L46.0 306.95L47.0 307.15L48.0 307.95L49.0 308.69L50.0 308.09L51.0 307.16L52.0 307.92L53.0 308.51L54.0 307.89L55.0 307.02L56.0 307.25L57.0 307.95L58.0 308.51L59.0 307.85L60.0 307.53L61.0 307.44L62.0 307.85L63.0 308.79L64.0 309.23L65.0 308.91L66.0 307.60L67.0 307.44L68.0 309.39L69.0 308.91L70.0 308.66L71.0 308.37L72.0 307.67L73.0 308.46L74.0 309.12L75.0 308.52L76.0 308.16L77.0 307.90L78.0 309.04L79.0 309.44L80.0 308.05L81.0 308.07L82.0 309.41L83.0 309.62L84.0 309.03L85.0 308.59L86.0 308.47L87.0 308.86L88.0 309.23L89.0 308.84L90.0 308.41L91.0 309.11L92.0 309.15L93.0 309.38L94.0 308.65L95.0 308.79L96.0 309.75L97.0 308.89L98.0 308.79L99.0 308.51L100.0 309.25L101.0 309.81L102.0 309.50L103.0 309.03L104.0 309.15L105.0 309.81L106.0 309.67L107.0 309.03L108.0 310.02L109.0 310.08L110.0 309.49L111.0 308.79L112.0 308.99L113.0 309.83L114.0 310.16L115.0 308.89L116.0 308.72L117.0 308.71L118.0 310.26L119.0 310.76L120.0 309.84L121.0 309.11L122.0 309.37L123.0 310.40L124.0 310.33L125.0 309.53L126.0 309.14L127.0 310.13L128.0 311.82L129.0 310.65L130.0 309.84L131.0 310.02L132.0 309.76L133.0 311.06L134.0 310.15L135.0 310.38L136.0 309.73L137.0 310.87L138.0 310.62L139.0 309.85L140.0 309.57L141.0 310.42L142.0 311.21L143.0 309.76L144.0 309.80L145.0 310.76L146.0 311.08L147.0 310.33L148.0 310.01L149.0 310.29L150.0 310.75L151.0 310.64L152.0 310.45L153.0 310.62L154.0 310.35L155.0 310.83L156.0 311.22L157.0 311.63L158.0 310.01L159.0 309.80L160.0 310.49L161.0 311.44L162.0 311.35L163.0 310.44L164.0 310.21L165.0 310.84L166.0 312.05L167.0 311.99L168.0 311.28L169.0 310.11L170.0 310.40L171.0 311.72L172.0 311.63L173.0 309.77L174.0 310.52L175.0 312.76L176.0 311.95L177.0 310.46L178.0 309.79L179.0 310.68L180.0 312.32L181.0 314.11L182.0 311.72L183.0 310.16L184.0 309.83L185.0 312.34L186.0 312.10L187.0 310.09L188.0 311.53L189.0 312.03L190.0 312.48L191.0 311.12L192.0 310.32L193.0 312.36L194.0 312.40L195.0 311.61L196.0 311.37L197.0 310.65L198.0 311.82L199.0 312.73L200.0 312.46L201.0 311.13L202.0 311.32L203.0 311.73L204.0 312.67L205.0 312.25L206.0 310.93L207.0 311.22L208.0 312.03L209.0 312.14L210.0 312.97L211.0 311.24L212.0 310.58L213.0 310.75L214.0 311.36L215.0 312.75L216.0 311.86L217.0 311.18L218.0 310.92L219.0 312.54L220.0 312.60L221.0 311.62L222.0 310.85L223.0 311.21L224.0 311.99L225.0 311.96L226.0 310.70L227.0 310.80L228.0 312.07L229.0 311.97L230.0 311.42L231.0 310.95L232.0 311.75L233.0 311.77L234.0 311.98L235.0 311.59L236.0 311.04L237.0 311.42L238.0 311.98L239.0 311.75L240.0 312.21L241.0 310.81L242.0 310.89L243.0 312.58L244.0 312.13L245.0 310.84L246.0 311.19L247.0 311.70L248.0 312.23L249.0 310.83L250.0 311.00L251.0 311.55L252.0 312.25L253.0 312.06L254.0 310.76L255.0 311.08L256.0 311.37L257.0 312.34L258.0 311.20L259.0 310.21L260.0 311.00L261.0 312.35L262.0 312.26L263.0 311.37L264.0 310.15L265.0 311.54L266.0 312.44L267.0 311.99L268.0 310.35L269.0 309.83L270.0 311.95L271.0 312.42L272.0 311.74L273.0 310.28L274.0 310.19L275.0 311.31L276.0 312.29L277.0 311.82L278.0 311.07L279.0 309.73L280.0 309.96L281.0 311.78L282.0 312.67L283.0 311.37L284.0 309.90L285.0 311.76L286.0 311.84L287.0 310.94L288.0 309.50L289.0 311.03L290.0 311.99L291.0 311.69L292.0 309.95L293.0 309.79L294.0 310.96L295.0 312.22L296.0 312.07L297.0 309.63L298.0 310.17L299.0 311.58L300.0 312.08L301.0 311.87L302.0 310.18L303.0 310.32L304.0 311.19L305.0 311.34L306.0 310.36L307.0 310.53L308.0 311.33L309.0 311.97L310.0 311.33L311.0 310.12L312.0 310.83L313.0 311.99L314.0 310.53L315.0 310.37L316.0 310.87L317.0 311.91L318.0 311.70L319.0 309.91L320.0 309.30L321.0 310.67L322.0 311.46L323.0 311.25L324.0 310.49L325.0 309.74L326.0 310.96L327.0 311.41L328.0 311.24L329.0 309.97L330.0 310.42L331.0 311.28L332.0 311.87L333.0 311.11L334.0 310.80L335.0 310.25L336.0 311.03L337.0 310.84L338.0 310.26L339.0 310.19L340.0 310.75L341.0 311.10L342.0 310.75L343.0 310.32L344.0 310.54L345.0 311.36L346.0 311.43L347.0 310.86L348.0 309.67L349.0 310.80L350.0 311.37L351.0 311.22L352.0 309.89L353.0 310.65L354.0 311.32L355.0 311.53L356.0 310.21L357.0 309.77L358.0 311.34L359.0 310.88L360.0 310.42L361.0 310.35L362.0 309.82L363.0 311.14L364.0 310.55L365.0 309.56L366.0 309.90L367.0 310.86L368.0 310.70L369.0 310.40L370.0 310.16L371.0 311.02L372.0 312.24L373.0 310.94L374.0 309.40L375.0 310.16L376.0 311.05L377.0 310.87L378.0 310.96L379.0 309.76L380.0 309.43L381.0 310.75L382.0 311.46L383.0 310.79L384.0 309.69L385.0 309.41L386.0 311.39L387.0 310.99L388.0 309.50L389.0 309.74L390.0 310.88L391.0 310.79L392.0 310.29L393.0 309.18L394.0 311.09L395.0 311.29L396.0 309.36L397.0 309.21L398.0 310.11L399.0 311.34L400.0 310.81L401.0 308.74L402.0 309.99L403.0 311.13L404.0 309.28L405.0 308.49L406.0 309.45L407.0 311.18L408.0 311.16L409.0 310.42L410.0 308.82L411.0 309.18L412.0 310.50L413.0 311.37L414.0 310.83L415.0 308.92L416.0 308.62L417.0 309.64L418.0 310.91L419.0 309.76L420.0 309.13L421.0 309.72L422.0 311.16L423.0 309.98L424.0 309.07L425.0 309.52L426.0 311.25L427.0 310.38L428.0 308.60L429.0 309.38L430.0 310.54L431.0 310.50L432.0 309.72L433.0 308.83L434.0 310.98L435.0 310.32L436.0 309.67L437.0 308.66L438.0 309.58L439.0 310.68L440.0 310.55L441.0 308.09L442.0 309.20L443.0 310.65L444.0 311.03L445.0 309.00L446.0 308.94L447.0 310.98L448.0 310.07L449.0 308.48L450.0 309.36L451.0 310.32L452.0 310.53L453.0 309.05L454.0 308.20L455.0 309.85L456.0 310.42L457.0 310.18L458.0 308.40L459.0 309.20L460.0 310.33L461.0 310.94L462.0 308.73L463.0 308.48L464.0 308.29L465.0 309.96L466.0 310.32L467.0 309.63L468.0 308.64L469.0 308.49L470.0 310.98L471.0 310.37L472.0 308.90L473.0 307.68L474.0 309.02L475.0 310.69L476.0 309.71L477.0 308.09L478.0 308.64L479.0 310.79L480.0 309.45L481.0 308.39L482.0 308.93L483.0 310.21L484.0 310.22L485.0 308.70L486.0 308.34L487.0 308.57L488.0 309.69L489.0 310.27L490.0 309.42L491.0 307.78L492.0 309.53L493.0 310.14L494.0 309.01L495.0 308.01L496.0 307.60L497.0 309.13L498.0 310.76L499.0 308.75L500.0 307.71L501.0 309.17L502.0 310.47L503.0 309.78L504.0 308.37L505.0 307.51L506.0 309.47L507.0 310.59L508.0 309.96L509.0 308.59L510.0 307.30L511.0 308.97L512.0 309.91L513.0 309.91L514.0 309.08L515.0 307.74L516.0 308.49L517.0 309.56L518.0 309.57L519.0 309.03L520.0 307.88L521.0 308.14L522.0 309.67L523.0 309.65L524.0 309.23L525.0 308.39L526.0 307.11L527.0 308.99L528.0 309.37L529.0 310.10L530.0 308.13L531.0 307.51L532.0 309.37L533.0 310.06L534.0 309.49L535.0 308.31L536.0 307.85L537.0 308.82L538.0 309.10L539.0 308.85L540.0 308.04L541.0 308.01L542.0 309.03L543.0 308.91L544.0 308.81L545.0 307.97L546.0 308.08L547.0 309.72L548.0 309.32L549.0 307.68L550.0 307.87L551.0 309.22L552.0 309.52L553.0 308.27L554.0 307.43L555.0 307.98L556.0 308.54L557.0 309.04L558.0 307.48L559.0 307.68L560.0 308.29L561.0 309.05L562.0 308.28L563.0 306.72L564.0 306.93L565.0 308.62L566.0 309.55L567.0 308.33L568.0 306.68L569.0 308.40L570.0 308.61L571.0 307.11L572.0 306.37L573.0 307.79L574.0 309.29L575.0 308.77L576.0 307.06L577.0 307.08L578.0 308.07L579.0 307.98L580.0 307.58L581.0 306.73L582.0 307.86L583.0 308.84L584.0 307.25L585.0 306.66L586.0 307.68L587.0 308.41L588.0 308.04L589.0 306.35L590.0 306.07L591.0 308.34L592.0 307.76L593.0 306.84L594.0 306.55L595.0 308.34L596.0 307.65L597.0 306.03L598.0 306.29L599.0 307.52L600.0 308.19L601.0 306.26L602.0 305.90L603.0 307.09L604.0 307.64L605.0 307.62L606.0 306.27L607.0 306.08L608.0 307.56L609.0 308.16L610.0 306.23L611.0 305.64L612.0 307.03L613.0 308.04L614.0 306.42L615.0 307.33L616.0 305.98L617.0 308.26L618.0 307.02L619.0 305.71L620.0 305.50L621.0 306.52L622.0 309.05L623.0 307.44L624.0 306.38L625.0 305.79L626.0 306.31L627.0 307.71L628.0 307.18L629.0 306.40L630.0 304.90L631.0 307.54L632.0 307.90L633.0 306.15L634.0 305.04L635.0 304.83L636.0 306.65L637.0 307.34L638.0 305.59L639.0 304.96L640.0 305.89L641.0 307.56L642.0 307.73L643.0 306.66L644.0 304.50L645.0 305.78L646.0 306.56L647.0 306.70L648.0 306.03L649.0 305.24L650.0 304.82L651.0 306.43L652.0 307.28L653.0 305.98L654.0 304.57L655.0 304.61L656.0 305.79L657.0 306.59L658.0 305.78L659.0 306.27L660.0 305.24L661.0 306.16L662.0 306.60L663.0 305.71L664.0 304.65L665.0 305.69L666.0 305.94L667.0 305.70L668.0 305.33L669.0 304.74L670.0 305.05L671.0 305.58L672.0 305.62L673.0 304.82L674.0 305.39L675.0 305.47L676.0 305.55L677.0 304.85L678.0 304.73L679.0 305.84L680.0 305.21L681.0 304.46L682.0 304.63L683.0 305.86L684.0 304.92L685.0 304.17L686.0 304.77L687.0 305.06L688.0 304.38L689.0 304.92L690.0 304.62L691.0 305.24L692.0 305.14L693.0 304.05L694.0 304.42L695.0 305.34L696.0 304.74L697.0 304.12L698.0 304.81L699.0 304.89L700.0 304.50" fill="none" stroke="#333" stroke-width="0.95" stroke-linejoin="round"/>
<line x1="77.20" y1="375.2" x2="77.20" y2="378.2" stroke="#888" stroke-width="1.1"/>
<line x1="77.20" y1="460.79999999999995" x2="77.20" y2="463.79999999999995" stroke="#888" stroke-width="1.1"/>
<line x1="120.33" y1="375.2" x2="120.33" y2="378.2" stroke="#888" stroke-width="1.1"/>
<line x1="120.33" y1="460.79999999999995" x2="120.33" y2="463.79999999999995" stroke="#888" stroke-width="1.1"/>
<line x1="163.46" y1="375.2" x2="163.46" y2="378.2" stroke="#888" stroke-width="1.1"/>
<line x1="163.46" y1="460.79999999999995" x2="163.46" y2="463.79999999999995" stroke="#888" stroke-width="1.1"/>
<line x1="206.59" y1="375.2" x2="206.59" y2="378.2" stroke="#888" stroke-width="1.1"/>
<line x1="206.59" y1="460.79999999999995" x2="206.59" y2="463.79999999999995" stroke="#888" stroke-width="1.1"/>
<line x1="249.72" y1="375.2" x2="249.72" y2="378.2" stroke="#888" stroke-width="1.1"/>
<line x1="249.72" y1="460.79999999999995" x2="249.72" y2="463.79999999999995" stroke="#888" stroke-width="1.1"/>
<line x1="292.85" y1="375.2" x2="292.85" y2="378.2" stroke="#888" stroke-width="1.1"/>
<line x1="292.85" y1="460.79999999999995" x2="292.85" y2="463.79999999999995" stroke="#888" stroke-width="1.1"/>
<line x1="335.98" y1="375.2" x2="335.98" y2="378.2" stroke="#888" stroke-width="1.1"/>
<line x1="335.98" y1="460.79999999999995" x2="335.98" y2="463.79999999999995" stroke="#888" stroke-width="1.1"/>
<line x1="379.11" y1="375.2" x2="379.11" y2="381.5" stroke="#888" stroke-width="1.1"/>
<line x1="379.11" y1="457.49999999999994" x2="379.11" y2="463.79999999999995" stroke="#888" stroke-width="1.1"/>
<line x1="422.24" y1="375.2" x2="422.24" y2="378.2" stroke="#888" stroke-width="1.1"/>
<line x1="422.24" y1="460.79999999999995" x2="422.24" y2="463.79999999999995" stroke="#888" stroke-width="1.1"/>
<line x1="465.37" y1="375.2" x2="465.37" y2="378.2" stroke="#888" stroke-width="1.1"/>
<line x1="465.37" y1="460.79999999999995" x2="465.37" y2="463.79999999999995" stroke="#888" stroke-width="1.1"/>
<line x1="508.50" y1="375.2" x2="508.50" y2="378.2" stroke="#888" stroke-width="1.1"/>
<line x1="508.50" y1="460.79999999999995" x2="508.50" y2="463.79999999999995" stroke="#888" stroke-width="1.1"/>
<line x1="551.63" y1="375.2" x2="551.63" y2="378.2" stroke="#888" stroke-width="1.1"/>
<line x1="551.63" y1="460.79999999999995" x2="551.63" y2="463.79999999999995" stroke="#888" stroke-width="1.1"/>
<line x1="594.76" y1="375.2" x2="594.76" y2="378.2" stroke="#888" stroke-width="1.1"/>
<line x1="594.76" y1="460.79999999999995" x2="594.76" y2="463.79999999999995" stroke="#888" stroke-width="1.1"/>
<line x1="637.89" y1="375.2" x2="637.89" y2="378.2" stroke="#888" stroke-width="1.1"/>
<line x1="637.89" y1="460.79999999999995" x2="637.89" y2="463.79999999999995" stroke="#888" stroke-width="1.1"/>
<line x1="33.5" y1="392.92" x2="39.5" y2="392.92" stroke="#999" stroke-width="1"/>
<line x1="695.0" y1="392.92" x2="700.0" y2="392.92" stroke="#999" stroke-width="1"/>
<line x1="33.5" y1="410.64" x2="39.5" y2="410.64" stroke="#999" stroke-width="1"/>
<line x1="695.0" y1="410.64" x2="700.0" y2="410.64" stroke="#999" stroke-width="1"/>
<line x1="33.5" y1="428.36" x2="39.5" y2="428.36" stroke="#999" stroke-width="1"/>
<line x1="695.0" y1="428.36" x2="700.0" y2="428.36" stroke="#999" stroke-width="1"/>
<line x1="33.5" y1="446.08" x2="46.0" y2="446.08" stroke="#aaa" stroke-width="1"/>
<line x1="49.6" y1="446.38" x2="688.0" y2="446.38" stroke="#999" stroke-width="1.1" stroke-dasharray="2.6 2.42"/>
<line x1="688.0" y1="446.08" x2="700.0" y2="446.08" stroke="#888" stroke-width="1"/>
<line x1="243.9" y1="376.2" x2="243.9" y2="463.79999999999995" stroke="#f85464" stroke-width="1.1" stroke-dasharray="3 2"/>
<line x1="468.6" y1="376.2" x2="468.6" y2="463.79999999999995" stroke="#282828" stroke-width="1.1" stroke-dasharray="3 2"/>
<path d="M33.5 375.2 H700.35 M33.5 463.79999999999995 H700.35" fill="none" stroke="#5e5e5e" stroke-width="1.3"/>
<line x1="700.35" y1="374.59999999999997" x2="700.35" y2="464.4" stroke="#333" stroke-width="1.1"/>
<line x1="33.9" y1="374.59999999999997" x2="33.9" y2="464.4" stroke="#0e2444" stroke-width="1.6"/>
<text x="37.90" y="387.50" class="lb" textLength="21.20" lengthAdjust="spacingAndGlyphs" style="">+4V</text>
<text x="37.10" y="458.60" class="lb" textLength="18.30" lengthAdjust="spacingAndGlyphs" style="">-1V</text>
<text x="206.00" y="387.50" class="lb" text-anchor="middle" textLength="43.50" lengthAdjust="spacingAndGlyphs" style="">Pumping</text>
<text x="282.00" y="387.50" class="lb" textLength="70.60" lengthAdjust="spacingAndGlyphs" style="">Cur A : 2.30 V</text>
<text x="399.90" y="387.50" class="lb" textLength="60.70" lengthAdjust="spacingAndGlyphs" style="">Avg : 2.33 V</text>
<text x="519.10" y="387.50" class="lb" textLength="70.50" lengthAdjust="spacingAndGlyphs" style="">Cur B : 2.39 V</text>
<rect x="638.9" y="381.3" width="12.3" height="11.3" fill="#fff" stroke="#a8c0e0" stroke-width="1.4"/>
<path d="M638.9 392.59999999999997 V381.3 H651.2" fill="none" stroke="#5a82c2" stroke-width="1.4"/>
<rect x="654.8" y="379.59999999999997" width="18.3" height="17.1" fill="url(#gbtn)" stroke="#8a94a6" stroke-width="1.1"/>
<rect x="655.8" y="380.59999999999997" width="16.3" height="15.100000000000001" fill="none" stroke="#f4f6fa" stroke-width="0.8"/>
<path d="M654.3 379.09999999999997 h3.2 L654.3 382.29999999999995 Z M673.5999999999999 379.09999999999997 h-3.2 L673.5999999999999 382.29999999999995 Z M654.3 397.2 h3.2 L654.3 394.0 Z M673.5999999999999 397.2 h-3.2 L673.5999999999999 394.0 Z" fill="#2c4c88"/>
<path d="M658.3499999999999 387.84999999999997 H669.55 M663.9499999999999 382.65 V393.04999999999995" stroke="#8e9299" stroke-width="4.4"/>
<path d="M659.05 387.84999999999997 H668.8499999999999 M663.9499999999999 383.34999999999997 V392.34999999999997" stroke="#b2b6bd" stroke-width="2.6"/>
<rect x="676.4" y="379.59999999999997" width="18.3" height="17.1" fill="url(#gbtn)" stroke="#8a94a6" stroke-width="1.1"/>
<rect x="677.4" y="380.59999999999997" width="16.3" height="15.100000000000001" fill="none" stroke="#f4f6fa" stroke-width="0.8"/>
<path d="M675.9 379.09999999999997 h3.2 L675.9 382.29999999999995 Z M695.1999999999999 379.09999999999997 h-3.2 L695.1999999999999 382.29999999999995 Z M675.9 397.2 h3.2 L675.9 394.0 Z M695.1999999999999 397.2 h-3.2 L695.1999999999999 394.0 Z" fill="#2c4c88"/>
<path d="M680.75 383.84999999999997 L690.3499999999999 391.84999999999997 M690.3499999999999 383.84999999999997 L680.75 391.84999999999997" stroke="#9298a2" stroke-width="3.4"/>
<path d="M680.75 383.84999999999997 L690.3499999999999 391.84999999999997 M690.3499999999999 383.84999999999997 L680.75 391.84999999999997" stroke="#d0d4dc" stroke-width="1.4"/>
<path d="M34.0 402.06L35.0 402.18L36.0 401.10L37.0 400.94L38.0 400.65L39.0 401.38L40.0 401.84L41.0 401.73L42.0 400.60L43.0 401.04L44.0 402.17L45.0 401.90L46.0 401.33L47.0 400.39L48.0 402.12L49.0 402.14L50.0 402.09L51.0 401.68L52.0 401.06L53.0 402.56L54.0 401.68L55.0 401.52L56.0 400.51L57.0 401.00L58.0 402.51L59.0 402.09L60.0 401.30L61.0 401.37L62.0 403.19L63.0 401.50L64.0 400.69L65.0 401.03L66.0 402.60L67.0 402.98L68.0 402.50L69.0 401.33L70.0 401.61L71.0 402.12L72.0 402.71L73.0 401.05L74.0 401.44L75.0 403.22L76.0 403.72L77.0 402.03L78.0 401.58L79.0 401.84L80.0 403.90L81.0 402.64L82.0 401.30L83.0 402.25L84.0 403.41L85.0 403.99L86.0 402.83L87.0 401.07L88.0 402.04L89.0 403.53L90.0 404.06L91.0 403.25L92.0 402.11L93.0 401.80L94.0 402.88L95.0 404.18L96.0 401.88L97.0 401.82L98.0 404.27L99.0 403.89L100.0 403.12L101.0 402.44L102.0 402.43L103.0 403.05L104.0 403.35L105.0 404.01L106.0 402.82L107.0 402.24L108.0 402.70L109.0 403.50L110.0 403.47L111.0 402.70L112.0 402.12L113.0 402.51L114.0 403.63L115.0 404.35L116.0 402.89L117.0 402.52L118.0 402.79L119.0 404.50L120.0 403.92L121.0 402.45L122.0 402.69L123.0 404.04L124.0 405.05L125.0 403.79L126.0 402.37L127.0 403.52L128.0 404.29L129.0 404.51L130.0 403.65L131.0 402.15L132.0 404.06L133.0 404.55L134.0 403.67L135.0 402.69L136.0 403.46L137.0 404.62L138.0 403.82L139.0 402.96L140.0 403.62L141.0 404.39L142.0 404.95L143.0 402.73L144.0 403.21L145.0 403.82L146.0 404.82L147.0 403.78L148.0 402.72L149.0 404.54L150.0 404.68L151.0 404.10L152.0 402.70L153.0 402.58L154.0 404.53L155.0 405.56L156.0 403.44L157.0 403.40L158.0 404.54L159.0 405.26L160.0 403.64L161.0 403.54L162.0 405.01L163.0 405.34L164.0 404.24L165.0 403.69L166.0 404.44L167.0 406.19L168.0 404.74L169.0 403.78L170.0 403.81L171.0 405.20L172.0 405.93L173.0 404.56L174.0 403.55L175.0 404.35L176.0 405.72L177.0 405.66L178.0 404.36L179.0 403.25L180.0 404.36L181.0 405.53L182.0 406.44L183.0 404.73L184.0 404.09L185.0 406.04L186.0 405.96L187.0 404.66L188.0 403.41L189.0 404.16L190.0 405.39L191.0 406.41L192.0 405.48L193.0 404.22L194.0 405.42L195.0 405.63L196.0 405.76L197.0 405.47L198.0 404.27L199.0 404.65L200.0 406.20L201.0 406.39L202.0 405.16L203.0 404.37L204.0 404.44L205.0 405.75L206.0 405.86L207.0 405.71L208.0 404.30L209.0 404.05L210.0 406.97L211.0 405.43L212.0 404.40L213.0 404.81L214.0 405.92L215.0 405.75L216.0 405.02L217.0 403.85L218.0 404.26L219.0 406.06L220.0 406.40L221.0 404.97L222.0 403.86L223.0 407.13L224.0 405.94L225.0 405.65L226.0 404.07L227.0 404.03L228.0 405.48L229.0 406.46L230.0 404.74L231.0 403.78L232.0 404.11L233.0 405.25L234.0 406.08L235.0 405.48L236.0 404.20L237.0 403.86L238.0 405.63L239.0 406.27L240.0 405.58L241.0 403.90L242.0 403.97L243.0 405.88L244.0 405.17L245.0 404.18L246.0 404.57L247.0 405.61L248.0 405.84L249.0 406.20L250.0 404.18L251.0 403.75L252.0 405.19L253.0 406.36L254.0 404.50L255.0 404.61L256.0 405.78L257.0 406.28L258.0 405.02L259.0 403.36L260.0 404.43L261.0 405.33L262.0 405.39L263.0 404.53L264.0 403.79L265.0 404.52L266.0 405.89L267.0 405.82L268.0 403.99L269.0 403.51L270.0 404.58L271.0 405.82L272.0 406.25L273.0 404.31L274.0 403.57L275.0 404.63L276.0 405.88L277.0 404.60L278.0 403.52L279.0 404.57L280.0 406.25L281.0 406.29L282.0 404.41L283.0 403.83L284.0 405.29L285.0 405.18L286.0 403.48L287.0 403.71L288.0 404.73L289.0 405.87L290.0 404.92L291.0 403.66L292.0 405.32L293.0 406.15L294.0 404.53L295.0 403.29L296.0 404.90L297.0 406.24L298.0 405.13L299.0 404.56L300.0 403.90L301.0 404.64L302.0 405.83L303.0 405.98L304.0 403.91L305.0 403.27L306.0 404.55L307.0 405.42L308.0 405.62L309.0 403.61L310.0 403.84L311.0 405.06L312.0 405.42L313.0 405.29L314.0 403.55L315.0 404.40L316.0 405.52L317.0 405.52L318.0 404.84L319.0 403.44L320.0 405.86L321.0 405.57L322.0 405.07L323.0 403.64L324.0 403.74L325.0 405.21L326.0 405.69L327.0 404.04L328.0 403.52L329.0 404.16L330.0 405.58L331.0 405.13L332.0 403.18L333.0 404.35L334.0 405.73L335.0 404.81L336.0 404.50L337.0 403.22L338.0 403.75L339.0 404.93L340.0 404.90L341.0 404.16L342.0 404.28L343.0 404.54L344.0 404.52L345.0 404.93L346.0 404.06L347.0 404.26L348.0 403.99L349.0 404.41L350.0 404.75L351.0 404.84L352.0 404.24L353.0 403.94L354.0 404.72L355.0 404.96L356.0 404.59L357.0 404.13L358.0 403.81L359.0 404.09L360.0 404.92L361.0 404.41L362.0 403.46L363.0 403.68L364.0 405.18L365.0 404.69L366.0 403.34L367.0 404.29L368.0 404.94L369.0 404.56L370.0 403.89L371.0 403.87L372.0 404.73L373.0 404.17L374.0 404.05L375.0 404.27L376.0 404.23L377.0 404.37L378.0 404.15L379.0 404.09L380.0 404.10L381.0 404.08L382.0 404.53L383.0 404.72L384.0 404.02L385.0 403.33L386.0 403.94L387.0 404.43L388.0 404.73L389.0 404.01L390.0 403.58L391.0 404.02L392.0 404.00L393.0 403.87L394.0 403.61L395.0 404.02L396.0 404.44L397.0 404.54L398.0 403.38L399.0 403.37L400.0 403.90L401.0 404.41L402.0 403.75L403.0 403.03L404.0 403.52L405.0 403.70L406.0 404.38L407.0 403.83L408.0 403.04L409.0 403.78L410.0 404.87L411.0 404.11L412.0 403.57L413.0 403.70L414.0 404.39L415.0 403.50L416.0 403.17L417.0 402.67L418.0 403.40L419.0 404.12L420.0 403.75L421.0 403.00L422.0 403.02L423.0 403.72L424.0 403.81L425.0 403.10L426.0 403.10L427.0 403.14L428.0 403.19L429.0 403.82L430.0 403.02L431.0 402.50L432.0 403.42L433.0 403.52L434.0 403.93L435.0 402.70L436.0 402.47L437.0 403.33L438.0 403.61L439.0 403.23L440.0 402.92L441.0 401.90L442.0 402.92L443.0 404.57L444.0 403.48L445.0 402.05L446.0 402.16L447.0 402.78L448.0 403.71L449.0 403.55L450.0 403.12L451.0 402.63L452.0 403.96L453.0 403.71L454.0 403.05L455.0 402.23L456.0 402.51L457.0 403.29L458.0 403.78L459.0 403.10L460.0 402.51L461.0 402.47L462.0 403.83L463.0 403.27L464.0 402.09L465.0 401.81L466.0 403.75L467.0 404.49L468.0 402.25L469.0 402.35L470.0 402.77L471.0 403.17L472.0 402.37L473.0 401.59L474.0 401.55L475.0 402.68L476.0 402.74L477.0 402.25L478.0 402.41L479.0 402.08L480.0 402.75L481.0 402.55L482.0 402.14L483.0 401.80L484.0 402.42L485.0 403.32L486.0 402.71L487.0 402.44L488.0 401.88L489.0 402.45L490.0 402.98L491.0 403.04L492.0 402.28L493.0 402.27L494.0 402.49L495.0 402.52L496.0 401.64L497.0 401.73L498.0 402.74L499.0 403.06L500.0 402.74L501.0 402.09L502.0 401.35L503.0 402.13L504.0 402.95L505.0 401.77L506.0 401.91L507.0 402.45L508.0 402.74L509.0 402.33L510.0 401.18L511.0 401.29L512.0 401.66L513.0 402.53L514.0 402.01L515.0 401.19L516.0 401.09L517.0 402.27L518.0 402.29L519.0 401.89L520.0 401.57L521.0 401.37L522.0 402.87L523.0 401.63L524.0 401.50L525.0 401.26L526.0 402.17L527.0 401.67L528.0 401.04L529.0 401.05L530.0 401.63L531.0 401.68L532.0 401.87L533.0 401.69L534.0 401.36L535.0 401.58L536.0 402.22L537.0 400.86L538.0 401.04L539.0 401.87L540.0 401.89L541.0 402.08L542.0 400.91L543.0 401.03L544.0 401.89L545.0 401.48L546.0 401.32L547.0 400.66L548.0 401.12L549.0 401.24L550.0 401.69L551.0 400.80L552.0 400.13L553.0 401.45L554.0 402.25L555.0 400.96L556.0 400.25L557.0 400.85L558.0 401.68L559.0 402.77L560.0 401.52L561.0 399.85L562.0 400.34L563.0 401.27L564.0 402.13L565.0 400.89L566.0 400.08L567.0 400.01L568.0 401.37L569.0 401.62L570.0 400.87L571.0 399.92L572.0 400.61L573.0 400.91L574.0 401.39L575.0 400.46L576.0 399.66L577.0 400.02L578.0 400.86L579.0 401.18L580.0 400.74L581.0 400.07L582.0 400.41L583.0 402.30L584.0 400.78L585.0 401.74L586.0 399.82L587.0 400.24L588.0 400.97L589.0 400.65L590.0 399.83L591.0 399.87L592.0 401.15L593.0 401.16L594.0 400.33L595.0 399.70L596.0 401.75L597.0 401.27L598.0 400.39L599.0 399.18L600.0 399.16L601.0 400.75L602.0 400.39L603.0 399.68L604.0 399.10L605.0 399.21L606.0 400.52L607.0 400.34L608.0 398.77L609.0 399.12L610.0 399.99L611.0 400.79L612.0 400.12L613.0 399.11L614.0 398.61L615.0 399.64L616.0 401.21L617.0 399.52L618.0 398.50L619.0 398.98L620.0 401.07L621.0 399.78L622.0 398.60L623.0 398.81L624.0 400.54L625.0 400.43L626.0 399.32L627.0 398.39L628.0 400.25L629.0 399.95L630.0 398.59L631.0 398.42L632.0 400.14L633.0 400.13L634.0 398.57L635.0 398.05L636.0 399.70L637.0 400.40L638.0 398.99L639.0 398.11L640.0 398.95L641.0 400.62L642.0 399.06L643.0 398.07L644.0 398.08L645.0 399.77L646.0 400.30L647.0 398.61L648.0 397.51L649.0 399.51L650.0 400.12L651.0 397.93L652.0 398.01L653.0 398.22L654.0 398.86L655.0 400.18L656.0 398.97L657.0 397.33L658.0 398.11L659.0 399.14L660.0 399.94L661.0 398.43L662.0 396.83L663.0 398.48L664.0 399.59L665.0 399.08L666.0 397.77L667.0 396.87L668.0 398.30L669.0 399.12L670.0 398.69L671.0 397.28L672.0 397.90L673.0 399.42L674.0 399.02L675.0 397.64L676.0 397.33L677.0 398.47L678.0 398.85L679.0 398.13L680.0 397.54L681.0 398.12L682.0 398.59L683.0 397.95L684.0 398.11L685.0 397.04L686.0 397.88L687.0 398.73L688.0 398.20L689.0 397.27L690.0 397.64L691.0 398.09L692.0 398.17L693.0 397.37L694.0 397.25L695.0 397.28L696.0 398.66L697.0 397.86L698.0 397.04L699.0 396.69L700.0 397.25" fill="none" stroke="#383838" stroke-width="0.95" stroke-linejoin="round"/>
<text x="234.3" y="461.60" class="lb" style="fill:#f03838">A</text>
<text x="459.6" y="461.60" class="lb" style="fill:#333">B</text>
</svg>
</body></html>
